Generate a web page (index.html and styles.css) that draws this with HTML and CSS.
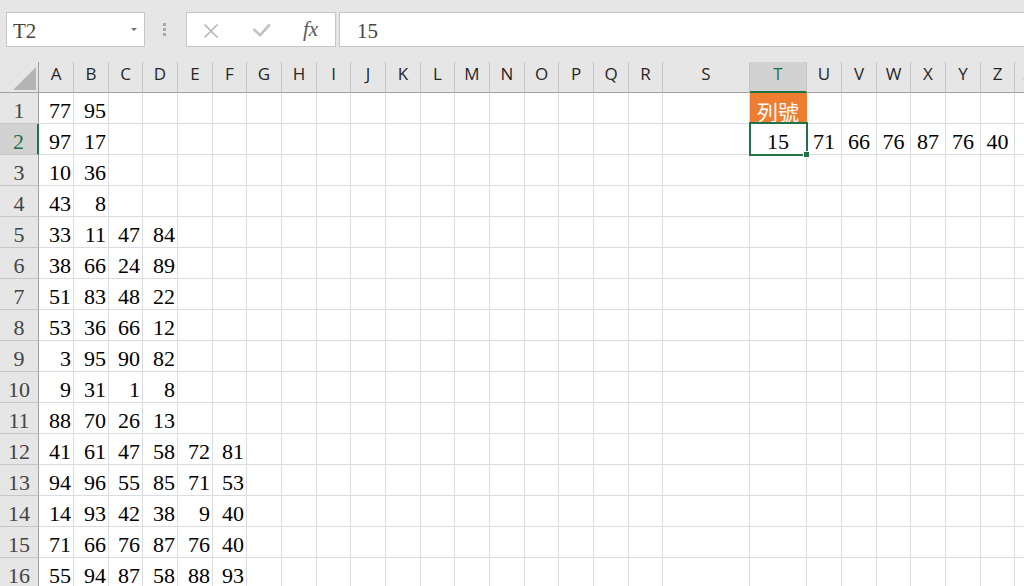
FILE: index.html
```html
<!DOCTYPE html>
<html>
<head>
	<meta charset="utf-8">
	<title>sheet</title>
	<link rel="stylesheet" href="styles.css">
</head>
<body>
<div class="toolbar">
	<div class="name-box">T2<span class="arrow"></span></div>
	<div class="grip"></div>
	<div class="fx-box">
		<svg class="cancel" width="16" height="14" viewBox="0 0 16 14"><path d="M1.5 0.5L14.5 13.5M14.5 0.5L1.5 13.5" stroke="#b4b4b4" stroke-width="1.5" fill="none"/></svg>
		<svg class="enter" width="19" height="14" viewBox="0 0 19 14"><path d="M1.5 6L8 12.2L17.8 1.5" stroke="#c2c2c2" stroke-width="2.6" fill="none"/></svg>
		<span class="fx">fx</span>
	</div>
	<div class="formula">15</div>
</div>
<div id="sheet" class="sheet"></div>
<script type="text/javascript">
	var cols = ['A','B','C','D','E','F','G','H','I','J','K','L','M','N','O','P','Q','R','S','T','U','V','W','X','Y','Z','AA'];
	//每列的数值，从A列开始
	var data = [
		[77,95],
		[97,17],
		[10,36],
		[43,8],
		[33,11,47,84],
		[38,66,24,89],
		[51,83,48,22],
		[53,36,66,12],
		[3,95,90,82],
		[9,31,1,8],
		[88,70,26,13],
		[41,61,47,58,72,81],
		[94,96,55,85,71,53],
		[14,93,42,38,9,40],
		[71,66,76,87,76,40],
		[55,94,87,58,88,93]
	];
	var row2 = [15,71,66,76,87,76,40]; // T2:Z2

	var str = '<div class="corner"><i></i></div>';
	for( var i = 0; i < cols.length; i++ ){
		str += '<div class="col-head' + ( cols[i] == 'T' ? ' on' : '' ) + '">' + cols[i] + '</div>';
	}
	for( var r = 0; r < data.length; r++ ){
		str += '<div class="row-head' + ( r == 1 ? ' on' : '' ) + '">' + ( r + 1 ) + '</div>';
		for( var c = 0; c < cols.length; c++ ){
			if( r == 0 && c == 19 ){
				str += '<div class="cell label">列號</div>';
			}else if( r == 1 && c >= 19 && c <= 25 ){
				str += '<div class="cell mid' + ( c == 19 ? ' sel' : '' ) + '">' + row2[c-19] + ( c == 19 ? '<span class="sel-box"><i></i></span>' : '' ) + '</div>';
			}else{
				str += '<div class="cell">' + ( data[r][c] !== undefined ? data[r][c] : '' ) + '</div>';
			}
		}
	}
	document.getElementById('sheet').innerHTML = str;
</script>
</body>
</html>
```

FILE: styles.css
```css
*{
	margin: 0;
	padding: 0;
	box-sizing: border-box;
}
html, body{
	width: 1024px;
	height: 586px;
	overflow: hidden;
	background: #fff;
}
.toolbar{
	height: 62px;
	background: #e6e6e6;
	display: flex;
	align-items: flex-start;
	padding-top: 12px;
}
.name-box{
	margin-left: 6px;
	width: 139px;
	height: 35px;
	background: #fff;
	border: 1px solid #c6c6c6;
	display: flex;
	align-items: flex-start;
	padding: 7px 0 0 6px;
	line-height: 23px;
	font: 21px/23px "Liberation Serif", serif;
	color: #444;
}
.name-box .arrow{
	margin: 8px 7px 0 auto;
	width: 0;
	height: 0;
	border-left: 3px solid transparent;
	border-right: 3px solid transparent;
	border-top: 3px solid #6f6f6f;
}
.grip{
	margin: 11px 0 0 18px;
	width: 3px;
	height: 13px;
	background: repeating-linear-gradient(to bottom, #a8a8a8 0, #a8a8a8 3px, transparent 3px, transparent 5px);
}
.fx-box{
	margin-left: 20px;
	width: 150px;
	height: 35px;
	background: #fff;
	border: 1px solid #c6c6c6;
	display: flex;
	align-items: center;
	padding-left: 16px;
}
.fx-box .cancel{
	margin-top: 3px;
}
.fx-box .enter{
	margin: 0 0 0 33px;
}
.fx{
	margin: 0 0 0 32px;
	font: italic 21px "Liberation Serif", serif;
	color: #5a5a5a;
}
.formula{
	flex: 1;
	margin-left: 3px;
	height: 35px;
	background: #fff;
	border: 1px solid #c6c6c6;
	border-right: none;
	padding: 7px 0 0 17px;
	font: 21px/23px "Liberation Serif", serif;
	color: #444;
}
.sheet{
	display: grid;
	grid-template-columns: 39px repeat(6, 35px 35px 34px) 87px 57px 35px 35px 34px 35px 35px 34px 40px;
	grid-auto-rows: 31px;
}
.corner{
	background: #e6e6e6;
	border-right: 1px solid #a0a0a0;
	border-bottom: 1px solid #a0a0a0;
	display: flex;
	justify-content: flex-end;
	align-items: flex-end;
	padding: 0 2px 2px 0;
}
.corner i{
	width: 0;
	height: 0;
	border-left: 23px solid transparent;
	border-bottom: 23px solid #b4b4b4;
}
.col-head{
	background: #e6e6e6;
	border-right: 1px solid #c6c6c6;
	border-bottom: 1px solid #a0a0a0;
	font: 17px/24px "Open Sans", sans-serif;
	color: #262626;
	text-align: center;
	padding-bottom: 6px;
	white-space: nowrap;
	overflow: hidden;
}
.col-head.on{
	background: #d2d2d2;
	color: #217346;
	border-bottom: 2px solid #217346;
	padding-bottom: 5px;
}
.row-head{
	background: #e6e6e6;
	border-right: 1px solid #a0a0a0;
	border-bottom: 1px solid #c6c6c6;
	font: 22px/22px "Liberation Serif", serif;
	color: #444;
	display: flex;
	justify-content: center;
	align-items: flex-end;
	padding-bottom: 1px;
}
.row-head.on{
	background: #d2d2d2;
	color: #217346;
	border-right: 2px solid #217346;
}
.cell{
	border-right: 1px solid #dadcdd;
	border-bottom: 1px solid #dadcdd;
	font: 22px/22px "Liberation Serif", serif;
	color: #000;
	display: flex;
	justify-content: flex-end;
	align-items: flex-end;
	padding: 0 2px 1px 0;
	white-space: nowrap;
}
.cell.mid{
	justify-content: center;
	padding-right: 0;
}
.cell.label{
	background: #ed7d31;
	border-color: #ed7d31;
	color: #fff;
	justify-content: center;
	padding-right: 0;
	font: 21px/22px "Noto Sans CJK TC", sans-serif;
}
.cell.sel{
	position: relative;
}
.sel-box{
	position: absolute;
	left: -1px;
	top: -2px;
	right: -2px;
	bottom: -2px;
	border: 2px solid #217346;
}
.sel-box i{
	position: absolute;
	right: -4px;
	bottom: -4px;
	width: 7px;
	height: 7px;
	background: #217346;
	border: 1px solid #fff;
}
```
